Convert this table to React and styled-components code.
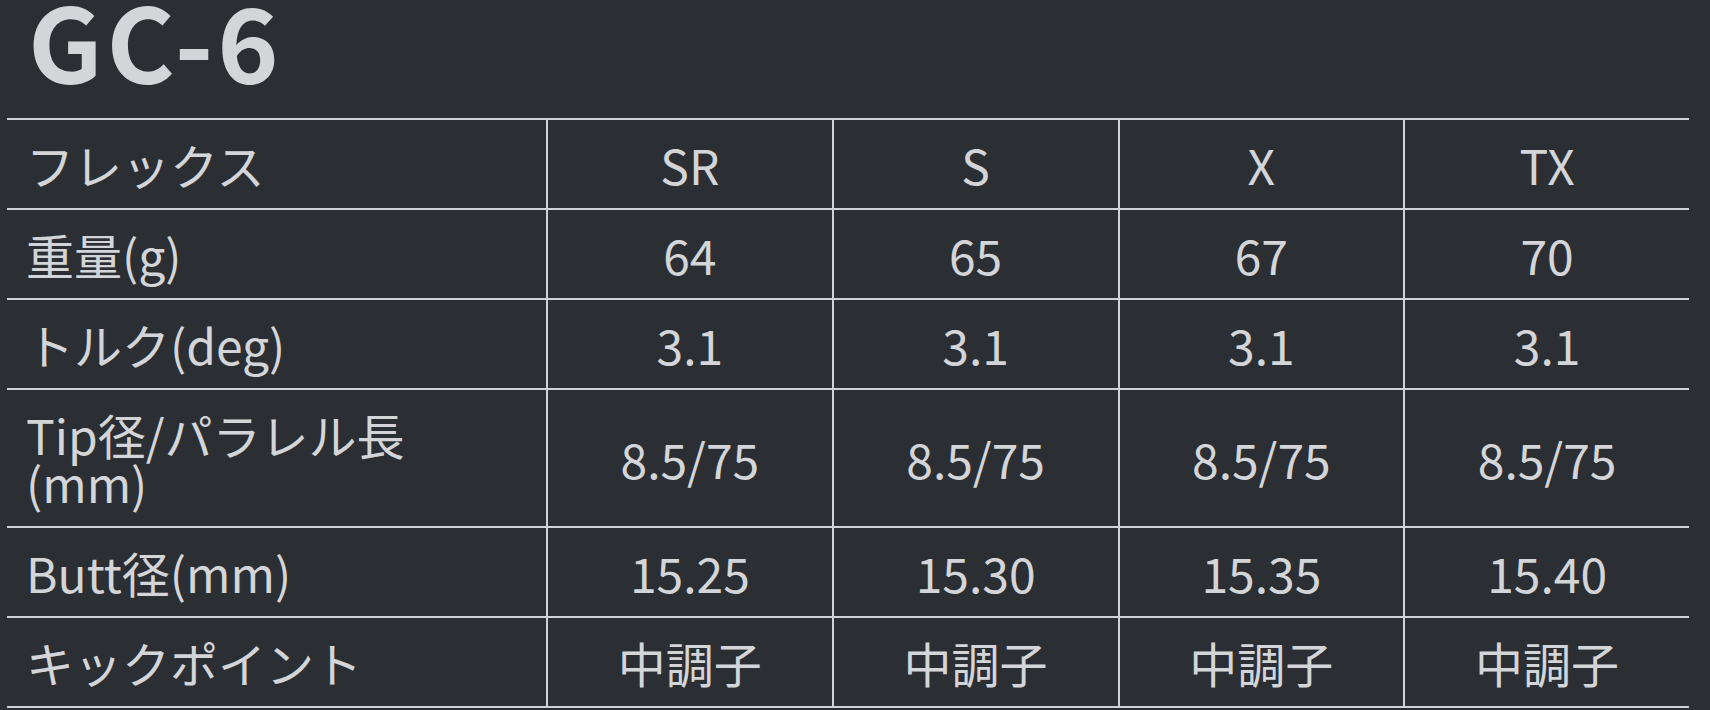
import React from "react";
import styled, { createGlobalStyle } from "styled-components";

const GlobalStyle = createGlobalStyle`
  html, body {
    margin: 0;
    background: #2b2f33;
    overflow: hidden;
  }
`;

const Page = styled.div`
  padding: 0 21px 0 7px;
  color: #d3d5d8;
  font-family: "Noto Sans CJK JP", "Noto Sans", sans-serif;
`;

const Title = styled.h1`
  margin: 0 0 40px;
  padding-left: 21px;
  font-size: 104px;
  font-weight: 600;
  line-height: 78px;
  letter-spacing: 4px;
`;

const SpecTable = styled.table`
  width: 1682px;
  table-layout: fixed;
  border-collapse: separate;
  border-spacing: 0;
  border-top: 2px solid #d0d3d6;
  font-size: 48px;
  line-height: 48px;
`;

const Label = styled.th`
  padding: 20px 0 20px 19px;
  text-align: left;
  font-weight: 400;
  border-bottom: 2px solid #d0d3d6;
`;

const Value = styled.td`
  padding: 20px 0;
  text-align: center;
  border-bottom: 2px solid #d0d3d6;
  border-left: 2px solid #d0d3d6;
`;

const flexes = ["SR", "S", "X", "TX"];

const rows = [
  { label: "重量(g)", values: ["64", "65", "67", "70"] },
  { label: "トルク(deg)", values: ["3.1", "3.1", "3.1", "3.1"] },
  {
    label: (
      <>
        Tip径/パラレル長
        <br />
        (mm)
      </>
    ),
    values: ["8.5/75", "8.5/75", "8.5/75", "8.5/75"]
  },
  { label: "Butt径(mm)", values: ["15.25", "15.30", "15.35", "15.40"] },
  { label: "キックポイント", values: ["中調子", "中調子", "中調子", "中調子"] }
];

export default function App() {
  return (
    <Page>
      <GlobalStyle />
      <Title>GC-6</Title>
      <SpecTable>
        <colgroup>
          <col style={{ width: "539px" }} />
          <col />
          <col />
          <col />
          <col />
        </colgroup>
        <tbody>
          <tr>
            <Label>フレックス</Label>
            {flexes.map(f => (
              <Value key={f}>{f}</Value>
            ))}
          </tr>
          {rows.map((row, i) => (
            <tr key={i}>
              <Label>{row.label}</Label>
              {row.values.map((v, j) => (
                <Value key={j}>{v}</Value>
              ))}
            </tr>
          ))}
        </tbody>
      </SpecTable>
    </Page>
  );
}
